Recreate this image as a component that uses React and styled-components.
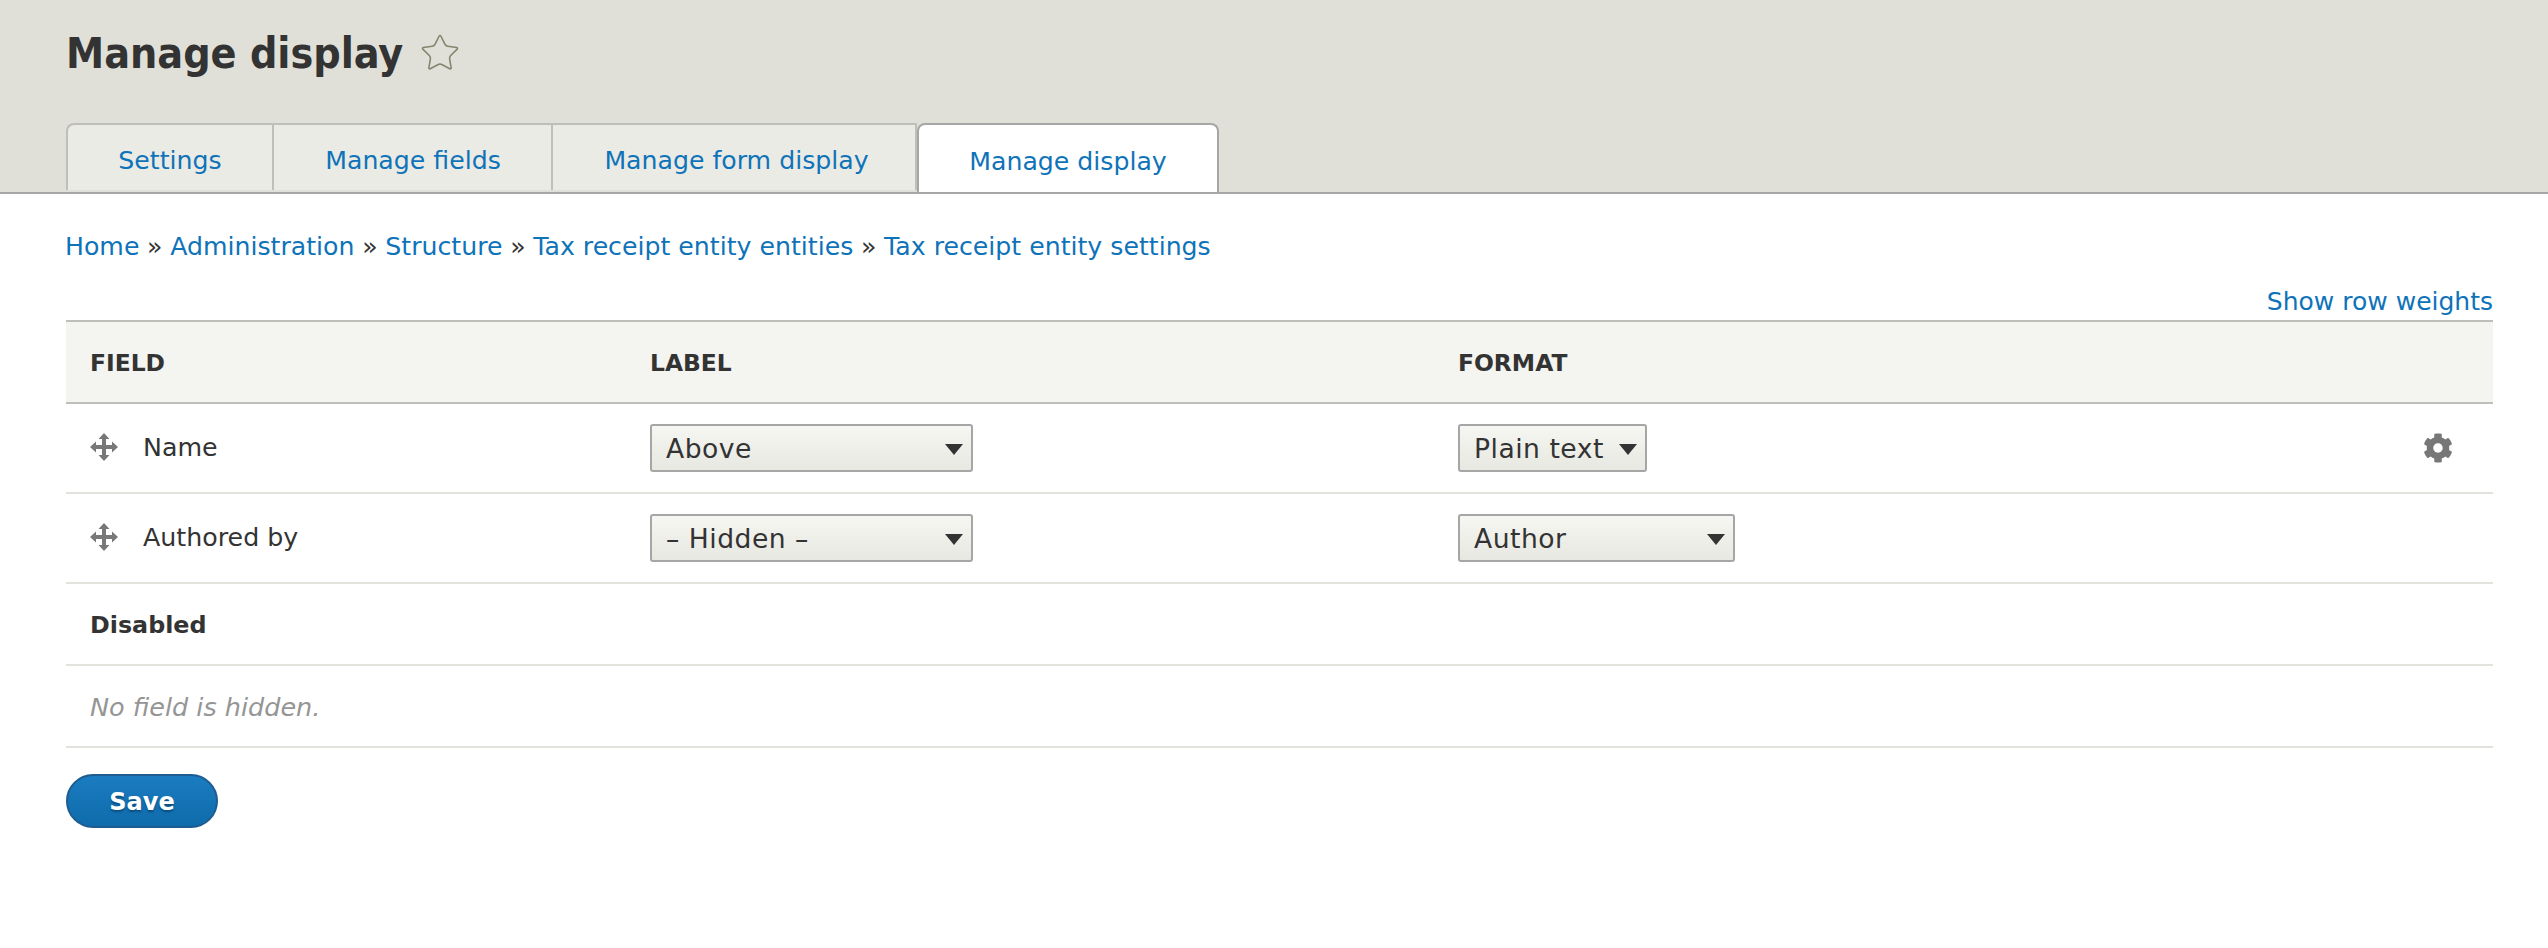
import React from "react";
import styled, { createGlobalStyle } from "styled-components";
import { Star } from "lucide-react";
import { FaCog } from "react-icons/fa";

const Global = createGlobalStyle`
  html, body { margin: 0; padding: 0; background: #fff; }
  body { font-family: "DejaVu Sans", "Liberation Sans", sans-serif; color: #333; }
  * { box-sizing: border-box; }
`;

const Header = styled.header`
  height: 194px;
  background: #e0e0d8;
  border-bottom: 2px solid #a6a6a6;
  padding: 0 66px;
  display: flex;
  flex-direction: column;
`;
const TitleRow = styled.div`
  height: 125px;
  display: flex;
  align-items: flex-start;
  padding-top: 30px;
  gap: 16px;
`;
const Title = styled.h1`
  margin: 0;
  font-size: 42.6px;
  line-height: 46px;
  font-weight: 700;
  font-stretch: condensed;
  color: #333;
`;
const StarMark = styled.span`
  display: flex;
  padding-top: 2px;
`;
const Tabs = styled.nav`
  display: flex;
  height: 69px;
`;
const Tab = styled.a`
  width: ${(p) => p.$w}px;
  height: ${(p) => (p.$active ? 69 : 67)}px;
  display: flex;
  align-items: center;
  justify-content: center;
  padding: 5px 0 0 ${(p) => p.$shift || 0}px;
  font-size: 25.2px;
  color: #0f73b9;
  background: ${(p) => (p.$active ? "#fff" : "#ebebe5")};
  border: 2px solid ${(p) => (p.$active ? "#a6a6a6" : "#bfbfba")};
  border-bottom: none;
  border-left-width: ${(p) => (p.$first || p.$active ? 2 : 0)}px;
  border-radius: ${(p) => (p.$first || p.$active ? (p.$active ? "8px 8px 0 0" : "8px 0 0 0") : "0")};
  position: relative;
  z-index: ${(p) => (p.$active ? 1 : 0)};
`;
const Main = styled.main`
  padding: 0 55px 0 66px;
`;
const Crumbs = styled.div`
  display: flex;
  gap: 7.7px;
  height: 66px;
  margin-left: -1px;
  padding-top: 40px;
  font-size: 25.2px;
  line-height: 48px;
  align-items: center;
`;
const Link = styled.a`
  color: #0f73b9;
`;
const Sep = styled.span`
  color: #333;
`;
const Weights = styled.div`
  display: flex;
  justify-content: flex-end;
  height: 60px;
  padding-top: 25px;
  font-size: 25px;
  line-height: 34px;
`;
const Table = styled.div`
  border-top: 2px solid #bfbfba;
`;
const Row = styled.div`
  display: grid;
  grid-template-columns: 560px 808px 1fr 70px;
  align-items: center;
  height: ${(p) => p.$h}px;
  padding-left: 24px;
  border-bottom: 2px solid ${(p) => (p.$head ? "#bfbfba" : "#e3e3dd")};
  background: ${(p) => (p.$head ? "#f4f4f0" : "#fff")};
`;
const HeadCell = styled.div`
  font-size: 23.4px;
  font-weight: 700;
  text-transform: uppercase;
  color: #333;
  padding-top: 2px;
`;
const FieldCell = styled.div`
  display: flex;
  align-items: center;
  gap: 25px;
  font-size: 25.3px;
  padding-bottom: 2px;
`;
const FullCell = styled.div`
  grid-column: 1 / -1;
  font-size: ${(p) => (p.$italic ? 25.5 : 23.8)}px;
  font-weight: ${(p) => (p.$bold ? 700 : 400)};
  font-style: ${(p) => (p.$italic ? "italic" : "normal")};
  color: ${(p) => (p.$italic ? "#959595" : "#333")};
  padding-top: 2px;
`;
const SelectWrap = styled.div`
  position: relative;
  width: ${(p) => p.$w}px;
  height: 48px;
  &::after {
    content: "";
    position: absolute;
    right: 10px;
    top: 20px;
    border-left: 9px solid transparent;
    border-right: 9px solid transparent;
    border-top: 11px solid #333;
    pointer-events: none;
  }
`;
const Select = styled.select`
  appearance: none;
  width: 100%;
  height: 100%;
  border: 2px solid #a6a6a6;
  border-radius: 3px;
  padding: 0 14px;
  font: 400 26.6px "DejaVu Sans", sans-serif;
  letter-spacing: 0.5px;
  color: #333;
  background: linear-gradient(#f6f6f2, #e8e8e2);
`;
const GearCell = styled.div`
  display: flex;
  color: #777;
  font-size: 30px;
`;
const Save = styled.button`
  margin-top: 26px;
  width: 152px;
  height: 54px;
  padding-top: 3px;
  border-radius: 27px;
  border: 2px solid #1e5c90;
  background: linear-gradient(#1a7cc0, #0f6bab);
  color: #fff;
  font: 700 24px "DejaVu Sans", sans-serif;
  text-shadow: 0 2px 2px #0b4d7d;
  display: block;
`;

const Grip = () => (
  <svg width="28" height="28" viewBox="0 0 28 28" fill="#787878">
    <path d="M14 0l5.5 6H16v6h6V8.500l6 5.500-6 5.500V16h-6v6h3.500L14 28l-5.500-6H12v-6H6v3.500L0 14l6-5.500V12h6V6H8.500z" />
  </svg>
);

const Sel = ({ w, v }) => (
  <SelectWrap $w={w}>
    <Select defaultValue={v}>
      <option>{v}</option>
    </Select>
  </SelectWrap>
);

export default function App() {
  return (
    <>
      <Global />
      <Header>
        <TitleRow>
          <Title>Manage display</Title>
          <StarMark><Star size={42} strokeWidth={0.9} color="#85846f" /></StarMark>
        </TitleRow>
        <Tabs>
          <Tab $w={208} $first>Settings</Tab>
          <Tab $w={279} $shift={1}>Manage fields</Tab>
          <Tab $w={364} $shift={5}>Manage form display</Tab>
          <Tab $w={302} $active>Manage display</Tab>
        </Tabs>
      </Header>
      <Main>
        <Crumbs>
          <Link>Home</Link><Sep>»</Sep>
          <Link>Administration</Link><Sep>»</Sep>
          <Link>Structure</Link><Sep>»</Sep>
          <Link>Tax receipt entity entities</Link><Sep>»</Sep>
          <Link>Tax receipt entity settings</Link>
        </Crumbs>
        <Weights><Link>Show row weights</Link></Weights>
        <Table>
          <Row $head $h={82}>
            <HeadCell>Field</HeadCell>
            <HeadCell>Label</HeadCell>
            <HeadCell>Format</HeadCell>
            <div />
          </Row>
          <Row $h={90}>
            <FieldCell><Grip />Name</FieldCell>
            <Sel w={323} v="Above" />
            <Sel w={189} v="Plain text" />
            <GearCell><FaCog /></GearCell>
          </Row>
          <Row $h={90}>
            <FieldCell><Grip />Authored by</FieldCell>
            <Sel w={323} v="– Hidden –" />
            <Sel w={277} v="Author" />
            <div />
          </Row>
          <Row $h={82}><FullCell $bold>Disabled</FullCell></Row>
          <Row $h={82}><FullCell $italic>No field is hidden.</FullCell></Row>
        </Table>
        <Save>Save</Save>
      </Main>
    </>
  );
}
